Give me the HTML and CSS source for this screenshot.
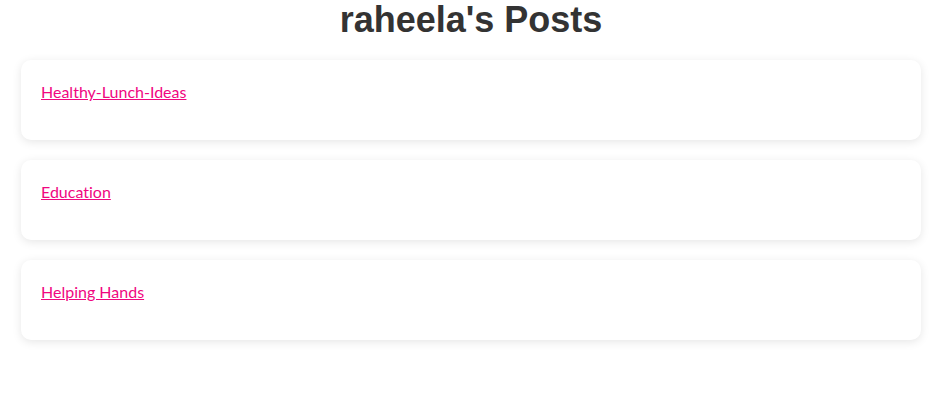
FILE: index.html
```html
<!DOCTYPE html>
<html>
<head>
<meta charset="utf-8">
<link rel="stylesheet" href="styles.css">
</head>
<body>
<div class="page">
  <h1 class="title">raheela's Posts</h1>
  <div class="posts">
    <div class="card"><a class="post-link" href="#">Healthy-Lunch-Ideas</a></div>
    <div class="card"><a class="post-link" href="#">Education</a></div>
    <div class="card"><a class="post-link" href="#">Helping Hands</a></div>
  </div>
</div>
</body>
</html>
```

FILE: styles.css
```css
html, body {
  margin: 0;
  padding: 0;
  background: #ffffff;
}
.page {
  width: 900px;
  margin: 0 0 0 21px;
  padding-bottom: 30px;
  font-family: Lato, "Liberation Sans", sans-serif;
  font-variant-ligatures: none;
}
.title {
  margin: 0;
  padding-top: 0;
  height: 60px;
  box-sizing: border-box;
  font-family: "Liberation Sans", Arial, sans-serif;
  font-weight: bold;
  font-size: 36px;
  line-height: 40px;
  color: #333333;
  text-align: center;
}
.posts {
  display: flex;
  flex-direction: column;
  gap: 20px;
}
.card {
  background: #ffffff;
  border-radius: 10px;
  box-shadow: 0 2px 10px rgba(0, 0, 0, 0.1);
  height: 80px;
  box-sizing: border-box;
  padding: 22px 20px;
}
.post-link {
  font-size: 16px;
  line-height: 20px;
  color: #f0077f;
  text-decoration: underline;
}
```
